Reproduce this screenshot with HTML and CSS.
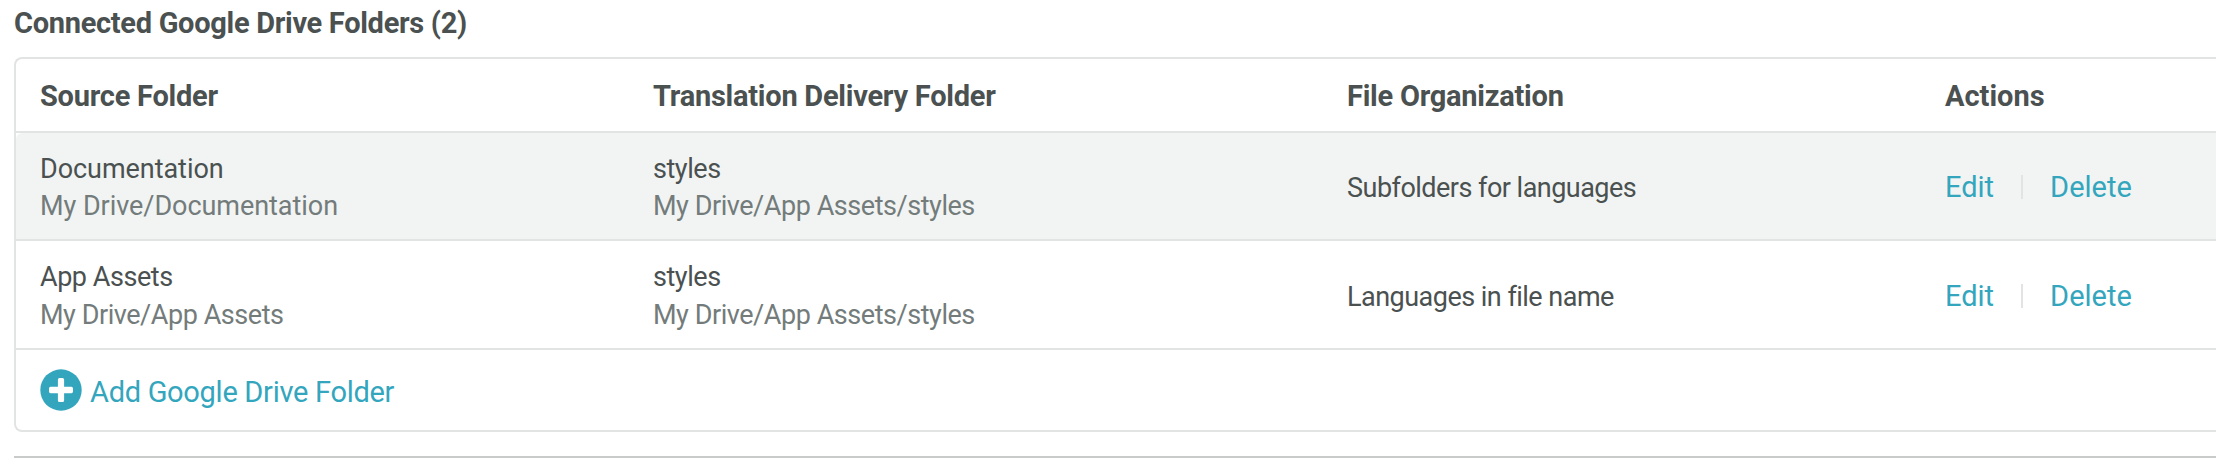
FILE: index.html
```html
<!DOCTYPE html>
<html lang="en">
<head>
<meta charset="utf-8">
<title>Connected Google Drive Folders</title>
<link rel="stylesheet" href="styles.css">
</head>
<body>
<main class="page">
  <h2 class="title">Connected Google Drive Folders (2)</h2>
  <section class="table">
    <div class="row head">
      <div class="source">Source Folder</div>
      <div class="delivery">Translation Delivery Folder</div>
      <div class="organization">File Organization</div>
      <div class="actions-head">Actions</div>
    </div>
    <div class="row shaded">
      <div class="folder"><span class="name wide">Documentation</span><span class="path wide">My Drive/Documentation</span></div>
      <div class="folder"><span class="name">styles</span><span class="path">My Drive/App Assets/styles</span></div>
      <div class="files">Subfolders for languages</div>
      <div class="actions"><a class="edit">Edit</a><i class="divider"></i><a class="delete">Delete</a></div>
    </div>
    <div class="row last">
      <div class="folder"><span class="name">App Assets</span><span class="path">My Drive/App Assets</span></div>
      <div class="folder"><span class="name">styles</span><span class="path">My Drive/App Assets/styles</span></div>
      <div class="files">Languages in file name</div>
      <div class="actions"><a class="edit">Edit</a><i class="divider"></i><a class="delete">Delete</a></div>
    </div>
    <div class="add">
      <svg class="plus" viewBox="0 0 42 42"><circle cx="21" cy="21" r="20.7" fill="#33a6be"/><path d="M19.5 9h3a1.6 1.6 0 0 1 1.6 1.6v7.2h7.3a1.6 1.6 0 0 1 1.6 1.6v3.2a1.6 1.6 0 0 1-1.6 1.6h-7.3v7.2a1.6 1.6 0 0 1-1.6 1.6h-3a1.6 1.6 0 0 1-1.6-1.6v-7.2h-7.3A1.6 1.6 0 0 1 9 22.600v-3.200a1.6 1.6 0 0 1 1.600-1.600h7.300v-7.200A1.600 1.600 0 0 1 19.500 9z" fill="#fff"/></svg>
      <a class="add-label">Add Google Drive Folder</a>
    </div>
  </section>
  <hr class="rule">
</main>
</body>
</html>
```
FILE: styles.css
```css
* { box-sizing: border-box; }
body { margin: 0; background: #fff; overflow: hidden; }
.page {
  height: 466px;
  padding-left: 14px;
  font-family: Roboto, "Liberation Sans", sans-serif;
  font-size: 27px;
  color: #4a5150;
  white-space: nowrap;
}
.title {
  margin: 0;
  height: 57px;
  font-size: 29px;
  line-height: 46px;
  font-weight: 700;
  letter-spacing: -0.3px;
}
.table {
  height: 375px;
  border: 2px solid #e2e3e3;
  border-right: 0;
  border-radius: 8px 0 0 8px;
}
.row {
  display: grid;
  grid-template-columns: 613px 694px 598px 1fr;
  align-items: center;
  padding-left: 24px;
  height: 108px;
  border-bottom: 2px solid #e2e3e3;
}
.head {
  height: 74px;
  padding-top: 2px;
  font-size: 29px;
  line-height: 70px;
  font-weight: 700;
  letter-spacing: -0.25px;
}
.actions-head { letter-spacing: 0; }
.shaded { background: #f2f4f3; border-top-left-radius: 6px; }
.last { height: 109px; }
.folder {
  display: flex;
  flex-direction: column;
  line-height: 37px;
  padding-top: 4px;
  letter-spacing: -0.45px;
}
.last .folder { line-height: 38px; padding-top: 3px; }
.wide { letter-spacing: -0.05px; }
.path { color: #737c7b; }
.files { padding-top: 4px; letter-spacing: -0.52px; }
.actions { display: flex; align-items: center; padding-top: 2px; color: #33a6be; font-size: 29px; }
.divider { width: 2px; height: 24px; margin: 0 28px 0 27px; background: #e2e3e3; }
.delete { margin-left: -1px; }
.add { display: flex; align-items: center; height: 80px; padding-left: 24px; gap: 8px; }
.plus { width: 42px; height: 42px; }
.add-label { color: #33a6be; font-size: 29px; padding-top: 3px; letter-spacing: -0.29px; }
.rule { margin: 24px 0 0; border: 0; height: 2px; background: #c9caca; }
```
